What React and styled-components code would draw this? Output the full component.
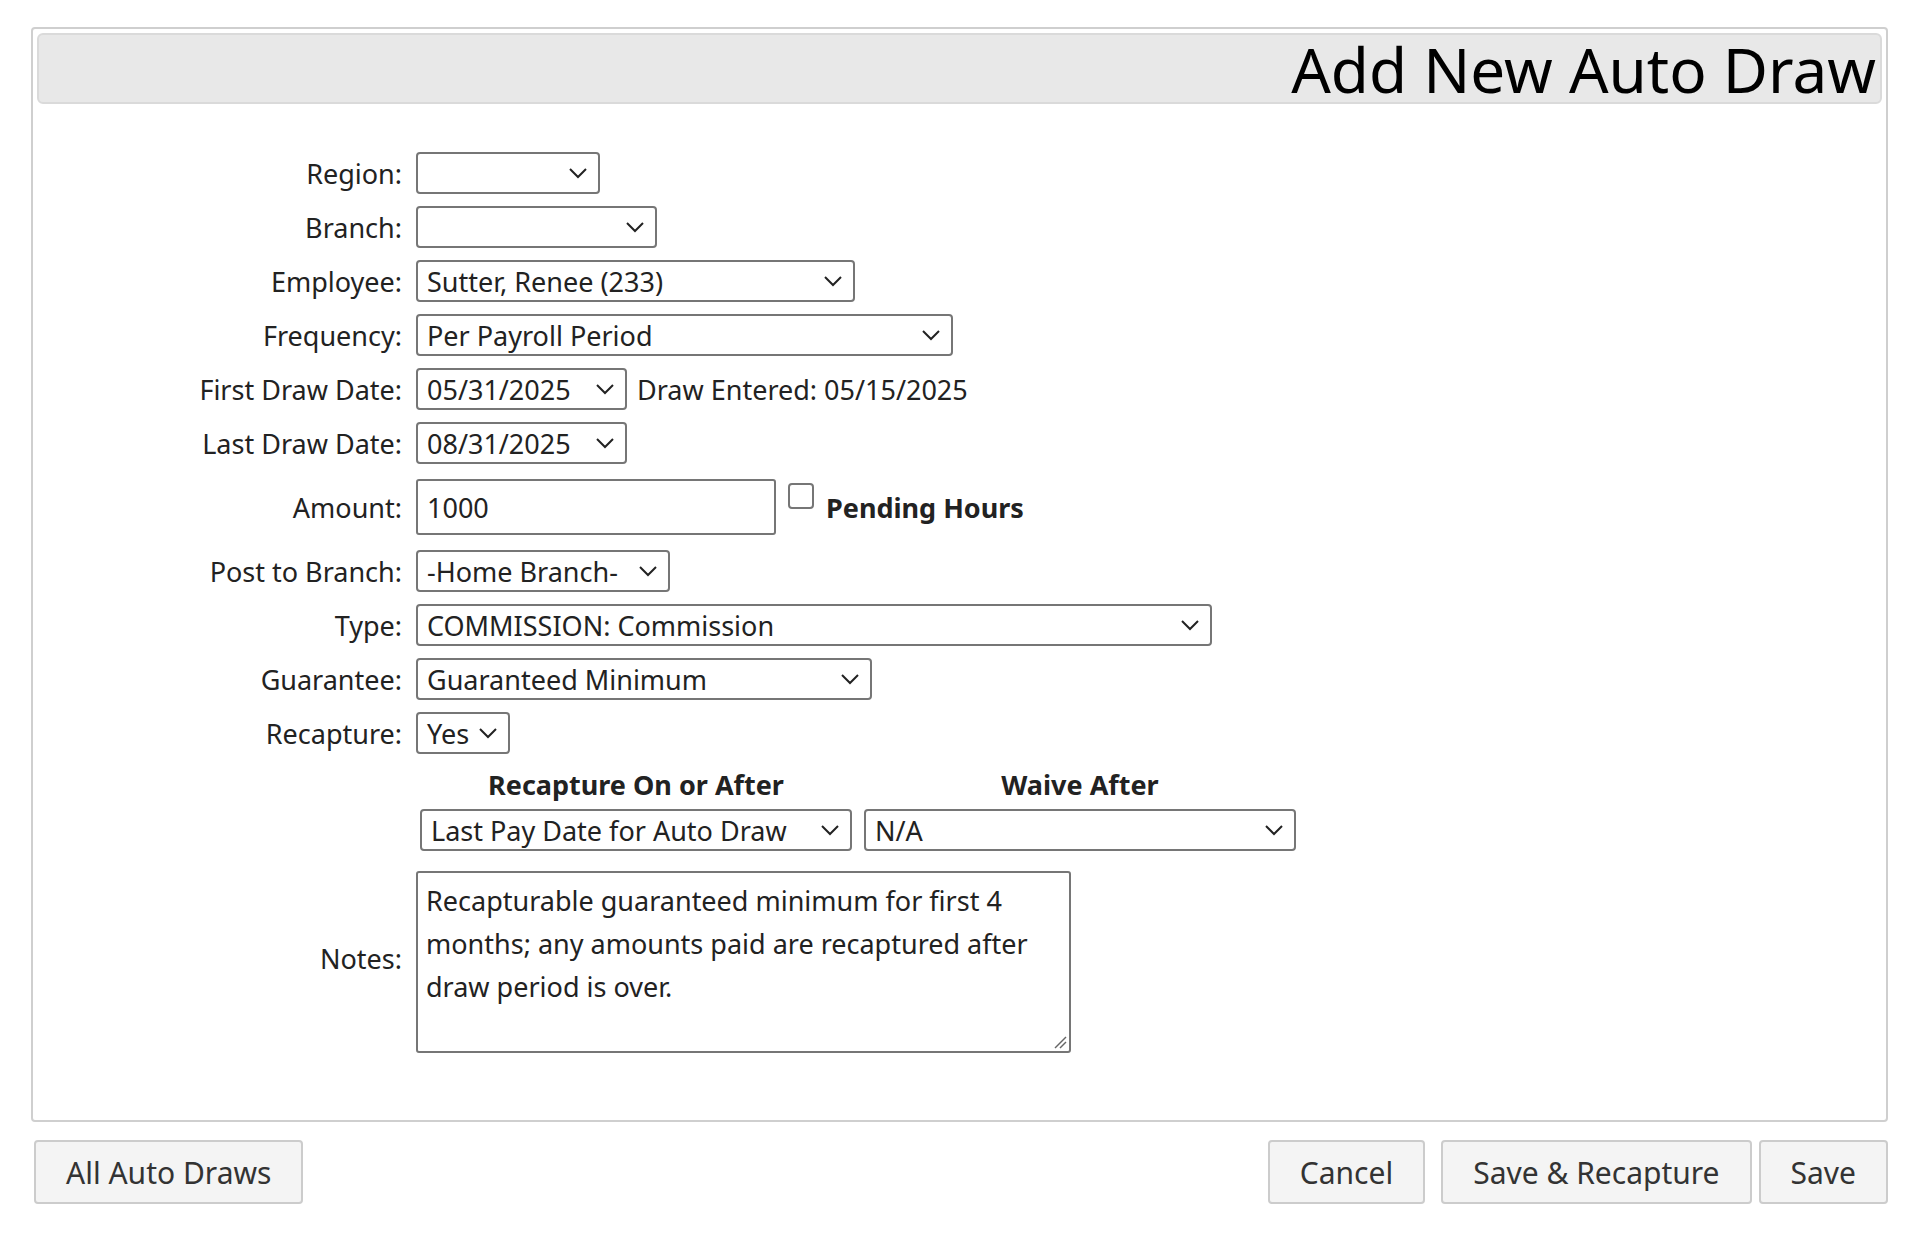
import React from "react";
import styled, { createGlobalStyle } from "styled-components";

const Global = createGlobalStyle`
  body { margin: 0; background: #fff; font-family: "Noto Sans", "DejaVu Sans", sans-serif; color: #222; }
`;

const Page = styled.div`
  padding: 27px 24px 0 31px;
`;

const Panel = styled.div`
  border: 2px solid #cfcfcf;
  border-radius: 4px;
  padding: 4px 4px 67px 4px;
`;

const Header = styled.div`
  height: 67px;
  background: #e8e8e8;
  border: 2px solid #dadada;
  border-radius: 6px;
  display: flex;
  align-items: center;
  justify-content: flex-end;
  padding-right: 4px;
  font-size: 62px;
  color: #000;
  line-height: 1;
`;

const Form = styled.div`
  display: grid;
  grid-template-columns: 365px auto;
  column-gap: 14px;
  row-gap: 12px;
  padding-top: 48px;
  align-items: center;
`;

const Label = styled.div`
  text-align: right;
  font-size: 27px;
  color: #222;
`;

const Cell = styled.div`
  display: flex;
  align-items: center;
  gap: ${(p) => p.$gap || 10}px;
  margin: ${(p) => p.$m || "0"};
`;

const SelectBox = styled.div`
  width: ${(p) => p.$w}px;
  height: 42px;
  box-sizing: border-box;
  border: 2px solid #767676;
  border-radius: 4px;
  display: flex;
  align-items: center;
  justify-content: space-between;
  padding: 0 10px 0 9px;
  font-size: 27px;
  color: #222;
  white-space: nowrap;
  background: #fff;
`;

const Input = styled.div`
  width: 360px;
  height: 56px;
  box-sizing: border-box;
  border: 2px solid #767676;
  border-radius: 3px;
  display: flex;
  align-items: center;
  padding: 0 9px;
  font-size: 27px;
`;

const Check = styled.div`
  width: 26px;
  height: 26px;
  box-sizing: border-box;
  border: 2px solid #767676;
  border-radius: 4px;
  align-self: flex-start;
  margin-top: 4px;
`;

const Bold = styled.span`
  font-weight: 700;
  font-size: 27px;
  color: #222;
`;

const Text = styled.span`
  font-size: 27px;
`;

const SubHeads = styled.div`
  display: flex;
  gap: 12px;
  margin-left: 4px;
`;

const SubHead = styled.div`
  width: ${(p) => p.$w}px;
  text-align: center;
  font-weight: 700;
  font-size: 27px;
`;

const Notes = styled.div`
  position: relative;
  width: 655px;
  height: 182px;
  box-sizing: border-box;
  border: 2px solid #767676;
  border-radius: 3px;
  padding: 6px 8px;
  font-size: 27px;
  line-height: 43px;
`;

const Grip = styled.svg`
  position: absolute;
  right: 2px;
  bottom: 2px;
`;

const Buttons = styled.div`
  display: flex;
  justify-content: space-between;
  padding: 18px 0 0 3px;
`;

const Group = styled.div`
  display: flex;
  gap: 7px;
`;

const Button = styled.div`
  height: 64px;
  box-sizing: border-box;
  padding: 0 ${(p) => p.$px || 30}px;
  display: flex;
  align-items: center;
  background: #f4f4f4;
  border: 2px solid #cccccc;
  border-radius: 4px;
  font-size: 30px;
  color: #333;
  margin-left: ${(p) => p.$ml || 0}px;
`;

const Chevron = () => (
  <svg width="20" height="12" viewBox="0 0 20 12">
    <polyline points="2,2 10,10 18,2" fill="none" stroke="#222" strokeWidth="2" />
  </svg>
);

const Select = ({ w, children }) => (
  <SelectBox $w={w}>
    <span>{children}</span>
    <Chevron />
  </SelectBox>
);

export default function App() {
  return (
    <>
      <Global />
      <Page>
        <Panel>
          <Header>Add New Auto Draw</Header>
          <Form>
            <Label>Region:</Label>
            <Cell><Select w={184} /></Cell>
            <Label>Branch:</Label>
            <Cell><Select w={241} /></Cell>
            <Label>Employee:</Label>
            <Cell><Select w={439}>Sutter, Renee (233)</Select></Cell>
            <Label>Frequency:</Label>
            <Cell><Select w={537}>Per Payroll Period</Select></Cell>
            <Label>First Draw Date:</Label>
            <Cell><Select w={211}>05/31/2025</Select><Text>Draw Entered: 05/15/2025</Text></Cell>
            <Label>Last Draw Date:</Label>
            <Cell><Select w={211}>08/31/2025</Select></Cell>
            <Label>Amount:</Label>
            <Cell $m="3px 0" $gap={12}><Input>1000</Input><Check /><Bold>Pending Hours</Bold></Cell>
            <Label>Post to Branch:</Label>
            <Cell><Select w={254}>-Home Branch-</Select></Cell>
            <Label>Type:</Label>
            <Cell><Select w={796}>COMMISSION: Commission</Select></Cell>
            <Label>Guarantee:</Label>
            <Cell><Select w={456}>Guaranteed Minimum</Select></Cell>
            <Label>Recapture:</Label>
            <Cell><Select w={94}>Yes</Select></Cell>
            <div />
            <SubHeads>
              <SubHead $w={432}>Recapture On or After</SubHead>
              <SubHead $w={432}>Waive After</SubHead>
            </SubHeads>
            <div />
            <Cell $m="-6px 0 0 4px" $gap={12}>
              <Select w={432}>Last Pay Date for Auto Draw</Select>
              <Select w={432}>N/A</Select>
            </Cell>
            <Label>Notes:</Label>
            <Cell $m="8px 0 0 0">
              <Notes>
                Recapturable guaranteed minimum for first 4 months; any amounts paid are recaptured after draw period is over.
                <Grip width="16" height="16" viewBox="0 0 16 16">
                  <line x1="4" y1="15" x2="15" y2="4" stroke="#666" strokeWidth="1.5" />
                  <line x1="9" y1="15" x2="15" y2="9" stroke="#666" strokeWidth="1.5" />
                </Grip>
              </Notes>
            </Cell>
          </Form>
        </Panel>
        <Buttons>
          <Button>All Auto Draws</Button>
          <Group>
            <Button>Cancel</Button>
            <Button $ml={9}>Save &amp; Recapture</Button>
            <Button>Save</Button>
          </Group>
        </Buttons>
      </Page>
    </>
  );
}
